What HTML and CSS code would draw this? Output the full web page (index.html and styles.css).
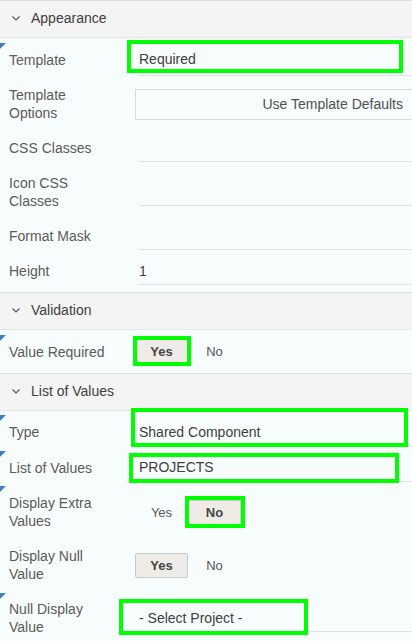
FILE: index.html
```html
<!DOCTYPE html>
<html lang="en">
<head>
<meta charset="utf-8">
<title>Property Editor</title>
<link rel="stylesheet" href="styles.css">
</head>
<body>
<div class="panel">
  <section class="section sec-appearance">
    <div class="sec-head"><svg class="chev" width="8" height="5" viewBox="0 0 8 5"><path d="M0.5 0.5 L4 4 L7.5 0.5" fill="none" stroke="#555" stroke-width="1.1"/></svg><span>Appearance</span></div>
    <div class="row h42">
      <i class="req"></i>
      <div class="label lb1">Template</div>
      <div class="field f33">Required</div>
      <div class="mark m-template"></div>
    </div>
    <div class="row h48">
      <div class="label">Template<br>Options</div>
      <div class="btn-field">Use Template Defaults</div>
    </div>
    <div class="row h40">
      <div class="label">CSS Classes</div>
      <div class="field f27"></div>
    </div>
    <div class="row h48">
      <div class="label">Icon CSS<br>Classes</div>
      <div class="field f27"></div>
    </div>
    <div class="row h40">
      <div class="label">Format Mask</div>
      <div class="field f27"></div>
    </div>
    <div class="row h30">
      <div class="label">Height</div>
      <div class="field f27">1</div>
    </div>
  </section>
  <section class="section">
    <div class="sec-head"><svg class="chev" width="8" height="5" viewBox="0 0 8 5"><path d="M0.5 0.5 L4 4 L7.5 0.5" fill="none" stroke="#555" stroke-width="1.1"/></svg><span>Validation</span></div>
    <div class="row h43">
      <i class="req"></i>
      <div class="label">Value Required</div>
      <div class="toggle"><span class="seg on">Yes</span><span class="seg">No</span></div>
      <div class="mark m-valreq"></div>
    </div>
  </section>
  <section class="section">
    <div class="sec-head"><svg class="chev" width="8" height="5" viewBox="0 0 8 5"><path d="M0.5 0.5 L4 4 L7.5 0.5" fill="none" stroke="#555" stroke-width="1.1"/></svg><span>List of Values</span></div>
    <div class="row h36 pt6">
      <i class="req req-hi"></i>
      <div class="label">Type</div>
      <div class="field f30">Shared Component</div>
      <div class="mark m-type"></div>
    </div>
    <div class="row h35 pt6">
      <i class="req req-hi"></i>
      <div class="label">List of Values</div>
      <div class="field f29">PROJECTS</div>
      <div class="mark m-lov"></div>
    </div>
    <div class="row h60">
      <i class="req req-hi"></i>
      <div class="label">Display Extra<br>Values</div>
      <div class="toggle"><span class="seg">Yes</span><span class="seg on">No</span></div>
      <div class="mark m-extra"></div>
    </div>
    <div class="row h46">
      <div class="label">Display Null<br>Value</div>
      <div class="toggle"><span class="seg on">Yes</span><span class="seg">No</span></div>
    </div>
    <div class="row h60">
      <i class="req"></i>
      <div class="label">Null Display<br>Value</div>
      <div class="field f27">- Select Project -</div>
      <div class="mark m-null"></div>
    </div>
  </section>
</div>
</body>
</html>
```
FILE: styles.css
```css
html, body {
  margin: 0;
  padding: 0;
}
body {
  background: #f7fdfd;
  font-family: "Liberation Sans", Arial, sans-serif;
  color: #404040;
  overflow: hidden;
}
.panel {
  width: 412px;
  overflow: hidden;
}
.sec-appearance {
  padding-bottom: 6px;
}
.sec-head {
  box-sizing: border-box;
  height: 38px;
  display: flex;
  align-items: center;
  padding: 0 0 2px 12px;
  background: #f4f4f4;
  border-top: 1px solid #dcdcdc;
  border-bottom: 1px solid #e4e4e4;
  font-size: 14px;
  color: #404040;
}
.chev {
  display: block;
  margin-right: 11px;
}
.row {
  position: relative;
  box-sizing: border-box;
  display: grid;
  grid-template-columns: 126px 1fr;
  align-items: center;
  padding-left: 9px;
}
.h30 { height: 30px; }
.h35 { height: 35px; }
.h36 { height: 36px; }
.h40 { height: 40px; }
.h42 { height: 42px; }
.h43 { height: 43px; }
.h46 { height: 46px; }
.h48 { height: 48px; }
.h60 { height: 60px; }
.pt6 { padding-top: 6px; }
.label {
  font-size: 14px;
  line-height: 18px;
  color: #5d5a57;
}
.lb1 {
  padding-top: 2px;
}
.req {
  position: absolute;
  left: 0;
  top: 5px;
  width: 0;
  height: 0;
  border-top: 6px solid #3f80c5;
  border-right: 6px solid transparent;
}
.req-hi {
  top: 4px;
}
.field {
  box-sizing: border-box;
  margin-left: 4px;
  display: flex;
  align-items: center;
  border-bottom: 1px solid #e2e2e2;
  font-size: 14px;
  color: #404040;
}
.f27 { height: 27px; }
.f29 { height: 29px; }
.f30 { height: 30px; }
.f33 { height: 33px; }
.btn-field {
  box-sizing: border-box;
  height: 31px;
  display: flex;
  align-items: center;
  justify-content: flex-end;
  padding-right: 9px;
  border: 1px solid #dadada;
  border-right: 0;
  font-size: 14px;
  color: #505050;
}
.toggle {
  display: flex;
}
.seg {
  box-sizing: border-box;
  width: 53px;
  height: 25px;
  display: flex;
  align-items: center;
  justify-content: center;
  font-size: 13px;
  color: #555;
}
.seg.on {
  background: #efece7;
  border: 1px solid #cbcbcb;
  border-radius: 2px;
  font-weight: bold;
  color: #444;
}
.mark {
  position: absolute;
  box-sizing: border-box;
  border: 4px solid #00ff00;
  z-index: 2;
}
.m-template { left: 127px; top: 2px; width: 276px; height: 33px; }
.m-valreq { left: 133px; top: 6px; width: 58px; height: 30px; }
.m-type { left: 131px; top: -3px; width: 277px; height: 39px; }
.m-lov { left: 129px; top: 6px; width: 270px; height: 30px; }
.m-extra { left: 185px; top: 14px; width: 60px; height: 32px; }
.m-null { left: 119px; top: 11px; width: 189px; height: 36px; }
```
